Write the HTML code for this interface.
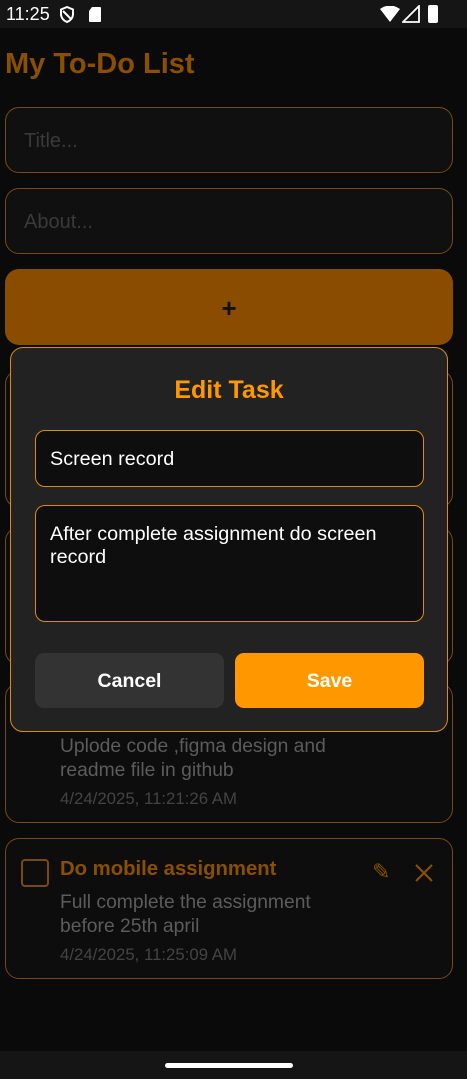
<!DOCTYPE html>
<html><head><meta charset="utf-8"><style>
*{margin:0;padding:0;box-sizing:border-box}
body{width:467px;height:1079px;background:#0a0a0a;font-family:"Liberation Sans",sans-serif;position:relative;overflow:hidden}
.abs{position:absolute}
.status{left:0;top:0;width:467px;height:28px;background:#151515;color:#fff;font-size:17px}
.inp{left:5px;width:448px;height:66px;border:1px solid #7a4812;border-radius:14px;background:#101010;color:#3a3a3a;font-size:20px;padding-left:18px;line-height:66px}
.card{left:5px;width:448px;border:1px solid #7a4812;border-radius:14px;background:#0d0d0d}
.desc{color:#5c5c5c;font-size:19.3px;line-height:23.5px}
.date{color:#444;font-size:16.8px}
</style></head><body>
<div class="abs status">
<span class="abs" style="left:6px;top:4px;font-size:18px">11:25</span>
<svg class="abs" style="left:59px;top:6px" width="16" height="17" viewBox="0 0 16 17"><path d="M8 1L2 3.5V8c0 4 3 7 6 8 3-1 6-4 6-8V3.5z" fill="none" stroke="#fff" stroke-width="2"/><path d="M4 5l8 8" stroke="#fff" stroke-width="2"/></svg>
<svg class="abs" style="left:88px;top:6px" width="14" height="17"><path d="M4 1h8a1 1 0 011 1v13a1 1 0 01-1 1H2a1 1 0 01-1-1V5z" fill="#fff"/></svg>
<svg class="abs" style="left:380px;top:6px" width="20" height="16"><path d="M0 3Q10-4 20 3L10 16z" fill="#fff"/></svg>
<svg class="abs" style="left:402px;top:5px" width="18" height="18"><path d="M17 1V17H1z" fill="none" stroke="#fff" stroke-width="1.8"/></svg>
<div class="abs" style="left:428px;top:5px;width:10px;height:18px;background:#fff;border-radius:2px"></div>
</div>
<div class="abs" style="left:5px;top:48px;color:#8a5000;font-size:29px;font-weight:bold">My To-Do List</div>
<div class="abs inp" style="top:107px">Title...</div>
<div class="abs inp" style="top:188px">About...</div>
<div class="abs" style="left:5px;top:269px;width:448px;height:76px;background:#8a4d00;border-radius:14px;text-align:center;line-height:78px;font-size:26px;font-weight:bold;color:#111">+</div>
<div class="abs card" style="top:370px;height:138px"></div>
<div class="abs card" style="top:527px;height:138px"></div>
<div class="abs card" style="top:683px;height:140px">
<div class="abs desc" style="left:54px;top:51px">Uplode code ,figma design and<br>readme file in github</div>
<div class="abs date" style="left:54px;top:105px">4/24/2025, 11:21:26 AM</div>
</div>
<div class="abs card" style="top:838px;height:141px">
<div class="abs" style="left:15px;top:20px;width:28px;height:28px;border:2px solid #7a4812;border-radius:4px"></div>
<div class="abs" style="left:54px;top:19px;color:#8a5000;font-size:20.3px;font-weight:bold">Do mobile assignment</div>
<div class="abs" style="left:366px;top:20px;color:#8a5000;font-size:22px">✎</div>
<svg class="abs" style="left:408px;top:24px" width="20" height="20"><path d="M2 2L18 18M18 2L2 18" stroke="#8a5000" stroke-width="2"/></svg>
<div class="abs desc" style="left:54px;top:52px">Full complete the assignment<br>before 25th april</div>
<div class="abs date" style="left:54px;top:106px">4/24/2025, 11:25:09 AM</div>
</div>
<div class="abs" style="left:10px;top:347px;width:438px;height:385px;background:#222;border:1.5px solid #e08a10;border-radius:13px">
<div class="abs" style="left:0;width:100%;top:28px;text-align:center;color:#ff9800;font-size:25px;font-weight:bold">Edit Task</div>
<div class="abs" style="left:24px;top:82px;width:389px;height:57px;background:#0e0e0e;border:1.5px solid #e08a10;border-radius:10px;color:#fff;font-size:19.8px;padding:17px 0 0 14px">Screen record</div>
<div class="abs" style="left:24px;top:157px;width:389px;height:117px;background:#0e0e0e;border:1.5px solid #e08a10;border-radius:10px;color:#fff;font-size:19.8px;line-height:23px;padding:17px 10px 0 14px">After complete assignment do screen record</div>
<div class="abs" style="left:24px;top:305px;width:189px;height:55px;background:#333;border-radius:9px;color:#fff;font-size:19.5px;font-weight:bold;text-align:center;line-height:57px">Cancel</div>
<div class="abs" style="left:224px;top:305px;width:189px;height:55px;background:#ff9800;border-radius:9px;color:#fff;font-size:19.5px;font-weight:bold;text-align:center;line-height:57px">Save</div>
</div>
<div class="abs" style="left:0;top:1051px;width:467px;height:28px;background:#151515"></div>
<div class="abs" style="left:165px;top:1063px;width:128px;height:5px;background:#fff;border-radius:3px"></div>
</body></html>
